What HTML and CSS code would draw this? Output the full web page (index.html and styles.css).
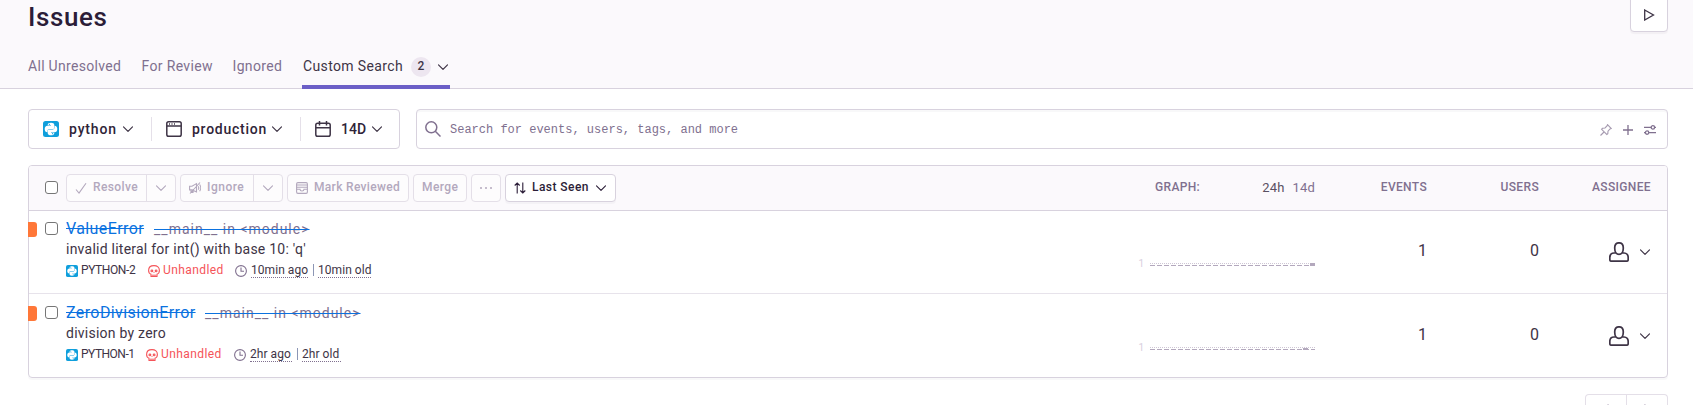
FILE: index.html
```
<!DOCTYPE html>
<html lang="en">
<head>
<meta charset="utf-8">
<title>Issues</title>
<link rel="stylesheet" href="styles.css">
</head>
<body>
<svg width="0" height="0" class="defs">
  <defs>
    <symbol id="chev" viewBox="0 0 10 10"><path d="M.5 2.8 5 7.3 9.500 2.800"/></symbol>
    <symbol id="py" viewBox="0 0 16 16"><rect width="16" height="16" rx="2.500" fill="#0f9fdc" stroke="none"/><path fill="#fff" stroke="none" d="M4.700 4C4.700 2.400 6 1.700 8 1.700s3.300.7 3.300 2.300V6.500C11.300 7.500 10.600 8 9.700 8H6.500C5.200 8 4.500 8.800 4.500 10v1.300C2.600 11.300 1.700 10 1.700 8s1-3.300 2.800-3.300H8v-.5H4.700z"/><path fill="#fff" stroke="none" d="M11.300 12c0 1.600-1.300 2.300-3.300 2.300s-3.300-.7-3.300-2.300V9.800c0-.9.700-1.300 1.600-1.300h3.200c1.300 0 2-.8 2-2V4.700c1.900 0 2.800 1.300 2.800 3.300s-1 3.300-2.800 3.300H8v.5h3.300z"/><circle cx="6.400" cy="3.300" r=".6" fill="#0f9fdc" stroke="none"/><circle cx="9.600" cy="12.700" r=".6" fill="#0f9fdc" stroke="none"/></symbol>
    <symbol id="skull" viewBox="0 0 12 12"><path d="M3 9.200C1.300 8.600.6 7.400.6 5.500.6 2.400 2.700.6 6 .6s5.400 1.800 5.400 4.900c0 1.900-.7 3.100-2.400 3.700v2.200H3zM5 11.400V9.600M7 11.400V9.600"/><circle cx="3.900" cy="5.900" r=".9"/><circle cx="8.100" cy="5.900" r=".9"/><path d="M6 7.300v.8"/></symbol>
    <symbol id="clock" viewBox="0 0 12 12"><circle cx="6" cy="6" r="5.400"/><path d="M6 2.600V6.300H9"/></symbol>
    <symbol id="user" viewBox="0 0 20 20"><path d="M7 11C5.900 9.800 5.700 8 5.700 6c0-3.400 1.500-5.200 4.300-5.200S14.300 2.600 14.300 6c0 2-.2 3.800-1.300 5-1.500 1.700-4.500 1.700-6 0zM6.600 11H5c-2.700 0-4.200 1.800-4.200 4.600V17.500c0 1.100.6 1.700 1.700 1.700h15c1.100 0 1.700-.6 1.700-1.700V15.600c0-2.800-1.500-4.600-4.200-4.600h-1.600"/></symbol>
  </defs>
</svg>
<header class="head">
  <div class="head-top">
    <h1>Issues</h1>
    <button class="play"><svg width="12" height="12" viewBox="0 0 12 12"><path d="M1.700 1 10.500 6 1.700 11z"/></svg></button>
  </div>
  <nav class="tabs">
    <a class="tab t1">All Unresolved</a>
    <a class="tab t2">For Review</a>
    <a class="tab t3">Ignored</a>
    <a class="tab active"><span class="t4">Custom Search</span><span class="badge">2</span><svg class="chev"><use href="#chev"/></svg></a>
  </nav>
</header>
<main>
  <div class="filters">
    <div class="scope">
      <div class="pick p1"><svg width="16" height="16"><use href="#py"/></svg><span>python</span><svg class="chev"><use href="#chev"/></svg></div>
      <div class="pick p2"><svg width="16" height="16" viewBox="0 0 16 16"><rect x=".8" y=".8" width="14.400" height="14.400" rx="1.800"/><path d="M.8 5h14.400M3 2.900h1M5.500 2.900h1M8 2.900h1"/></svg><span>production</span><svg class="chev"><use href="#chev"/></svg></div>
      <div class="pick p3"><svg width="16" height="16" viewBox="0 0 16 16"><rect x=".8" y="2.200" width="14.400" height="13" rx="1.800"/><path d="M.8 6.800h14.400M4.500 0v4.500M11.500 0v4.500"/></svg><span>14D</span><svg class="chev"><use href="#chev"/></svg></div>
    </div>
    <div class="search">
      <svg class="glass" width="16" height="16" viewBox="0 0 16 16"><circle cx="6.300" cy="6.300" r="5.500"/><path d="M10.300 10.300 15.500 15.500"/></svg>
      <span class="placeholder">Search for events, users, tags, and more</span>
      <svg class="tool pin" width="12" height="12" viewBox="0 0 12 12"><path d="M.5 11.500 4 8M7.500.7 11.300 4.500 10 5 8 7.200 7.800 9.700 6.800 10.500 1.600 5.300 2.500 4.300 5 4 7 2z"/></svg>
      <svg class="tool" width="10" height="10" viewBox="0 0 10 10"><path d="M5 0v10M0 5h10"/></svg>
      <svg class="tool" width="12" height="12" viewBox="0 0 12 12"><path d="M0 3.400h7M10.800 3.400H12M0 8.600h1.200M5 8.600h7"/><circle cx="8.900" cy="3.400" r="1.700"/><circle cx="3.100" cy="8.600" r="1.700"/></svg>
    </div>
  </div>

  <section class="panel">
    <div class="panel-head">
      <i class="box"></i>
      <div class="actions">
        <div class="btn split off b1"><span class="main"><svg width="12" height="12" viewBox="0 0 12 12"><path d="M1 7.500 4 11 11 1.200"/></svg><b>Resolve</b></span><span class="more"><svg class="chev"><use href="#chev"/></svg></span></div>
        <div class="btn split off b2"><span class="main"><svg width="12" height="12" viewBox="0 0 12 12"><path d="M.6 4.200H3L7.500 1.600V10L3 7.900H.6zM2 8v2.400h2V8.500M9.200 4.300c.6.900.6 2.400 0 3.300M10.600 2.500c1.300 1.800 1.300 5 0 6.800M1 11.500 11 .5"/></svg><b>Ignore</b></span><span class="more"><svg class="chev"><use href="#chev"/></svg></span></div>
        <div class="btn off b3"><svg width="12" height="12" viewBox="0 0 12 12"><rect x=".6" y=".6" width="10.800" height="10.800" rx="1.300"/><path d="M.6 3h10.800M.6 5.200h10.800M.6 7.200H4c0 2.400 4 2.400 4 0h3.400"/></svg><b>Mark Reviewed</b></div>
        <div class="btn off b4"><b>Merge</b></div>
        <div class="btn off b5"><i class="dot"></i><i class="dot"></i><i class="dot"></i></div>
        <div class="btn b6"><svg width="12" height="12" viewBox="0 0 12 12"><path d="M3.200 11.500V1M.7 3.500 3.200 1 5.700 3.500M8.800.5V11M6.300 8.500 8.800 11 11.300 8.500"/></svg><b>Last Seen</b><svg class="chev"><use href="#chev"/></svg></div>
      </div>
      <div class="col graph-head"><span class="cap">Graph:</span><span class="range"><span>24h</span><span class="muted">14d</span></span></div>
      <div class="col c-ev cap">Events</div>
      <div class="col c-us cap">Users</div>
      <div class="col c-as cap">Assignee</div>
    </div>

    <article class="row r1">
      <i class="level"></i>
      <i class="box"></i>
      <div class="issue">
        <div class="title"><a class="name">ValueError</a><a class="where">__main__ in &lt;module&gt;</a></div>
        <div class="msg">invalid literal for int() with base 10: 'q'</div>
        <div class="meta"><svg><use href="#py"/></svg><span class="id">PYTHON-2</span><svg class="red"><use href="#skull"/></svg><span class="unh">Unhandled</span><svg class="grey"><use href="#clock"/></svg><span class="ago">10min ago</span><i class="bar"></i><span class="old">10min old</span></div>
      </div>
      <div class="chart"><span>1</span><svg width="165" height="6" viewBox="0 0 165 6"><path class="dots" d="M0 1.500h165"/><path class="ticks" d="M0 3.500h165"/><rect x="160" y="1" width="5" height="3"/></svg></div>
      <div class="col c-ev num">1</div>
      <div class="col c-us num">0</div>
      <div class="c-as who"><svg width="20" height="20"><use href="#user"/></svg><svg class="chev"><use href="#chev"/></svg></div>
    </article>
    <article class="row r2">
      <i class="level"></i>
      <i class="box"></i>
      <div class="issue">
        <div class="title"><a class="name">ZeroDivisionError</a><a class="where">__main__ in &lt;module&gt;</a></div>
        <div class="msg">division by zero</div>
        <div class="meta"><svg><use href="#py"/></svg><span class="id">PYTHON-1</span><svg class="red"><use href="#skull"/></svg><span class="unh">Unhandled</span><svg class="grey"><use href="#clock"/></svg><span class="ago">2hr ago</span><i class="bar"></i><span class="old">2hr old</span></div>
      </div>
      <div class="chart"><span>1</span><svg width="165" height="6" viewBox="0 0 165 6"><path class="dots" d="M0 1.500h165"/><path class="ticks" d="M0 3.500h165"/><rect x="153" y="2" width="5" height="2"/></svg></div>
      <div class="col c-ev num">1</div>
      <div class="col c-us num">0</div>
      <div class="c-as who"><svg width="20" height="20"><use href="#user"/></svg><svg class="chev"><use href="#chev"/></svg></div>
    </article>
  </section>
  <div class="pager">
    <div class="pages"><span><svg width="8" height="12" viewBox="0 0 8 12"><path d="M6.500.5 1.500 6 6.500 11.500"/></svg></span><span><svg width="8" height="12" viewBox="0 0 8 12"><path d="M1.500.5 6.500 6 1.500 11.500"/></svg></span></div>
  </div>
</main>
</body>
</html>
```
FILE: styles.css
```
* { box-sizing: border-box; }
body {
  margin: 0;
  background: #fff;
  color: #2b1d38;
  font-family: Roboto, "Liberation Sans", sans-serif;
  font-size: 14px;
}
.defs { position: absolute; }
svg { display: block; flex: none; fill: none; stroke: currentColor; stroke-width: 1.3; }
.chev { width: 10px; height: 10px; stroke-width: 1.2; stroke-linecap: round; stroke-linejoin: round; }
span, a, b { white-space: nowrap; }

.head { height: 89px; background: #fbf9fc; border-bottom: 1px solid #d8d2de; padding: 0 25px 0 28px; }
.head-top { height: 45px; display: flex; justify-content: space-between; align-items: flex-start; }
h1 { margin: 0; font-size: 26px; line-height: 34px; font-weight: 500; letter-spacing: .6px; }
.play { width: 38px; height: 38px; margin-top: -6px; padding: 0; border: 1px solid #d8d2de; border-radius: 4px; background: #fff; color: #3e3446; display: flex; align-items: center; justify-content: center; box-shadow: 0 2px 1px rgba(43,34,51,.04); }
.play svg { margin-top: 3px; }
.tabs { display: flex; height: 44px; color: #80708f; line-height: 18px; }
.tab { padding-top: 12px; }
.t1 { width: 113.500px; letter-spacing: .3px; }
.t2 { width: 91px; letter-spacing: .35px; }
.t3 { width: 69.500px; letter-spacing: .35px; }
.active { width: 148px; display: flex; align-items: flex-start; padding-left: 1px; color: #3e3446; border-bottom: 4px solid #6c5fc7; }
.t4 { width: 108px; letter-spacing: .37px; }
.badge { width: 20px; height: 20px; border-radius: 10px; background: #ede6f0; font-size: 12px; font-weight: 500; text-align: center; line-height: 19px; margin-right: 7px; }
.active .chev { margin-top: 5px; }

main { height: 316px; overflow: hidden; padding: 20px 25px 0 28px; }
.filters { display: flex; gap: 16px; }
.scope { width: 372px; height: 40px; border: 1px solid #d8d2de; border-radius: 4px; display: flex; align-items: center; }
.pick { display: flex; align-items: center; height: 24px; font-weight: 500; color: #3e3446; }
.pick svg { stroke-width: 1.5; }
.pick .chev { stroke-width: 1.2; }
.pick span { margin: 0 6px 0 10px; line-height: 16px; padding-bottom: 1px; color: #2f2438; }
.pick + .pick { border-left: 1px solid #e5e0e9; }
.p1 { width: 122px; padding-left: 14px; }
.p2 { width: 149px; padding-left: 14px; }
.p3 { padding-left: 14px; }
.p1 span { width: 48px; letter-spacing: .85px; }
.p2 span { width: 74px; letter-spacing: .75px; }
.p3 span { width: 25px; letter-spacing: 0; }
.search { flex: 1; height: 40px; border: 1px solid #d8d2de; border-radius: 4px; display: flex; align-items: center; padding: 0 11px 0 8px; gap: 11px; color: #80708f; box-shadow: inset 0 2px 1px rgba(43,34,51,.03); }
.glass { stroke-width: 1.5; }
.placeholder { flex: 1; margin-left: -2px; padding-top: 1px; font: 12px/16px "Liberation Mono", monospace; }
.tool { margin-top: 2px; }
.pin { opacity: .7; stroke-width: 1.1; }

.panel { margin-top: 16px; height: 213px; border: 1px solid #d8d2de; border-radius: 4px; box-shadow: 0 2px 1px rgba(43,34,51,.03); }
.panel-head { height: 45px; display: flex; align-items: center; background: #fbf9fc; border-bottom: 1px solid #d8d2de; border-radius: 3px 3px 0 0; padding: 0 16px 0 16px; }
.panel-head .box { margin-top: -1px; }
.box { width: 13px; height: 13px; border: 1px solid #767676; border-radius: 3px; background: #fff; flex: none; }
.actions { display: flex; gap: 4px; margin-left: 8px; flex: 1; }
.btn { height: 28px; border: 1px solid #d8d2de; border-radius: 4px; background: #fff; display: flex; align-items: center; font-size: 12px; padding-left: 8px; box-shadow: 0 2px 1px rgba(43,34,51,.03); }
.btn b { font-weight: 500; margin-left: 6px; padding-bottom: 2px; }
.btn svg { stroke-width: 1.1; }
.off { color: #b3a8bd; border-color: #e4dfe8; background: #fdfcfd; box-shadow: none; }
.split { padding: 0; }
.main { display: flex; align-items: center; height: 26px; padding-left: 8px; border-right: 1px solid #e4dfe8; }
.b1 .main { width: 80px; }
.b2 .main { width: 73px; }
.more { padding-left: 9px; }
.b1 { width: 110px; }
.b1 b { letter-spacing: .4px; margin-left: 6px; }
.b2 { width: 103px; }
.b2 b { letter-spacing: .5px; margin-left: 6px; }
.b3 { width: 122px; }
.b3 b { letter-spacing: .32px; }
.b4 { width: 54px; }
.b4 b { margin-left: 0; letter-spacing: .4px; }
.b5 { width: 30px; gap: 3px; }
.dot { width: 2px; height: 2px; border-radius: 1px; background: #b3a8bd; }
.b6 { width: 111px; }
.b6 b { width: 58px; margin-right: 6px; letter-spacing: .45px; }

.col { text-align: right; }
.cap { text-transform: uppercase; font-size: 12px; font-weight: 500; color: #80708f; letter-spacing: .35px; padding-bottom: 2px; }
.graph-head { width: 160px; display: flex; justify-content: space-between; align-items: center; }
.range { display: flex; gap: 8px; font-size: 13px; letter-spacing: .15px; color: #5a5062; padding-bottom: 1px; }
.muted { color: #80708f; }
.c-ev { width: 112px; }
.c-us { width: 112px; }
.c-as { width: 112px; }

.row { height: 82px; display: flex; align-items: flex-start; padding: 11px 16px 0 0; margin-left: -1px; }
.r2 { height: 84px; border-top: 1px solid #e7e3eb; padding-top: 12px; margin-left: 0; }
.r2 .level { margin-left: -1px; }
.level { width: 9px; height: 15px; background: #ff7738; border-radius: 0 3px 3px 0; }
.row .box { margin-left: 8px; }
.issue { flex: 1; padding-left: 8px; }
.title { display: flex; height: 20px; margin-top: -3px; line-height: 20px; gap: 10px; }
.name { font-size: 16px; color: #0b72e0; text-decoration: line-through; letter-spacing: .4px; }
.where { font-size: 14px; color: #80708f; text-decoration: line-through #0b72e0; letter-spacing: 1px; }
.r1 .name { width: 78px; }
.r2 .name { width: 129px; }
.msg { height: 20px; line-height: 20px; color: #3e3446; letter-spacing: .24px; }
.meta { display: flex; height: 20px; align-items: center; font-size: 12px; line-height: 14px; color: #3e3446; margin-top: 1px; }
.meta svg { width: 12px; height: 12px; stroke-width: 1.1; margin-top: 2px; }
.id { width: 54px; margin: 0 13px 0 3px; letter-spacing: -.4px; }
.red { color: #f55459; }
.unh { color: #f55459; width: 60px; margin: 0 12px 0 3px; letter-spacing: .42px; }
.grey { color: #80708f; }
.ago, .old { border-bottom: 1px dotted #80708f; line-height: 13px; margin-top: 1px; letter-spacing: .05px; }
.ago { width: 57px; margin-left: 4px; }
.old { width: 53px; }
.r2 .id { width: 52px; letter-spacing: -.5px; }
.r2 .unh { width: 61px; }
.r2 .ago { width: 42px; }
.r2 .old { width: 39px; }
.bar { width: 1px; height: 12px; background: #8c96b5; margin: 0 4px 0 5px; }
.chart { display: flex; align-items: center; gap: 6px; height: 12px; margin-top: 35px; color: #d8cfde; font-size: 10px; }
.chart svg { margin-top: 3px; }
.chart rect { fill: #b3a8bd; stroke: none; }
.dots { stroke: #cfc7d5; stroke-width: 1; stroke-dasharray: 1 1; }
.ticks { stroke: #b3a8bd; stroke-width: 1; stroke-dasharray: 5 2; }
.num { font-size: 16px; line-height: 20px; padding-top: 19px; color: #3e3446; }
.who { display: flex; justify-content: flex-end; align-items: center; gap: 11px; padding: 20px 1px 0 0; color: #3e3446; }
.who svg { stroke-width: 1.7; }
.who .chev { stroke-width: 1.2; }

.pager { display: flex; justify-content: flex-end; margin-top: 16px; }
.pages { display: flex; width: 83px; height: 11px; overflow: hidden; border: 1px solid #e4dfe8; border-bottom: 0; border-radius: 4px 4px 0 0; color: #b3a8bd; }
.pages span { flex: 1; display: flex; justify-content: center; padding-top: 9px; }
.pages span + span { border-left: 1px solid #e4dfe8; }
```
